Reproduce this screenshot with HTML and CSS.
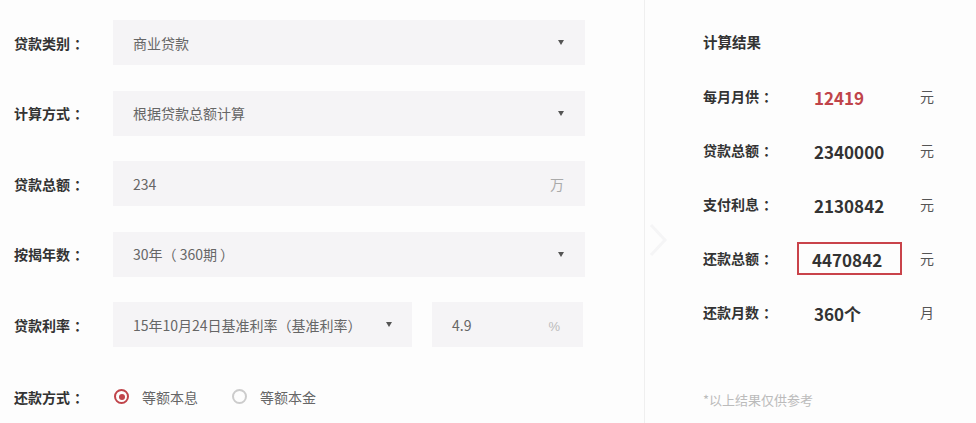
FILE: index.html
```html
<!DOCTYPE html>
<html lang="zh-CN">
<head>
<meta charset="utf-8">
<link rel="stylesheet" href="styles.css">
</head>
<body>
<div class="page">
  <div class="form">
    <div class="row">
      <div class="label">贷款类别<span class="colon">：</span></div>
      <div class="field select"><span>商业贷款</span><i class="caret"></i></div>
    </div>
    <div class="row">
      <div class="label">计算方式<span class="colon">：</span></div>
      <div class="field select"><span>根据贷款总额计算</span><i class="caret"></i></div>
    </div>
    <div class="row">
      <div class="label">贷款总额<span class="colon">：</span></div>
      <div class="field"><span>234</span><span class="unit">万</span></div>
    </div>
    <div class="row">
      <div class="label">按揭年数<span class="colon">：</span></div>
      <div class="field select"><span>30年（ 360期 ）</span><i class="caret"></i></div>
    </div>
    <div class="row">
      <div class="label">贷款利率<span class="colon">：</span></div>
      <div class="field select short"><span>15年10月24日基准利率（基准利率）</span><i class="caret"></i></div>
      <div class="field rate"><span>4.9</span><span class="unit pct">%</span></div>
    </div>
    <div class="row radio-row">
      <div class="label">还款方式<span class="colon">：</span></div>
      <label class="radio checked"><i class="dot"></i>等额本息</label>
      <label class="radio"><i class="dot"></i>等额本金</label>
    </div>
  </div>
  <div class="result">
    <svg class="chev" width="22" height="34" viewBox="0 0 22 34"><path d="M3 2 L17 17 L3 32" fill="none" stroke="#f5f5f6" stroke-width="3"/></svg>
    <div class="title">计算结果</div>
    <div class="rrow"><div class="rlabel">每月月供<span class="colon">：</span></div><div class="val red">12419</div><div class="runit">元</div></div>
    <div class="rrow"><div class="rlabel">贷款总额<span class="colon">：</span></div><div class="val">2340000</div><div class="runit">元</div></div>
    <div class="rrow"><div class="rlabel">支付利息<span class="colon">：</span></div><div class="val">2130842</div><div class="runit">元</div></div>
    <div class="rrow"><div class="rlabel">还款总额<span class="colon">：</span></div><div class="val boxed">4470842</div><div class="runit">元</div></div>
    <div class="rrow"><div class="rlabel">还款月数<span class="colon">：</span></div><div class="val">360个</div><div class="runit">月</div></div>
    <div class="note">*以上结果仅供参考</div>
  </div>
</div>
</body>
</html>
```

FILE: styles.css
```css
html, body {
  margin: 0;
  padding: 0;
  background: #fdfdfd;
}
body {
  font-family: "Noto Sans CJK SC", "Noto Sans", sans-serif;
  color: #333;
  width: 976px;
  height: 423px;
  overflow: hidden;
}
.page {
  display: flex;
  height: 423px;
}
.form {
  width: 645px;
  box-sizing: border-box;
  padding: 20px 0 0 14px;
  border-right: 1px solid #efefef;
}
.row {
  display: flex;
  align-items: center;
  height: 45px;
  margin-bottom: 25.5px;
}
.label {
  width: 99px;
  font-size: 14px;
  font-weight: 700;
  color: #333;
  flex: none;
}
.colon {
  padding-left: 4px;
}
.field {
  display: flex;
  align-items: center;
  justify-content: space-between;
  box-sizing: border-box;
  width: 472px;
  height: 45px;
  background: #f5f4f6;
  padding: 0 21px 0 20px;
  font-size: 14px;
  color: #666;
}
.field.short {
  width: 299px;
  padding-right: 20px;
}
.field.rate {
  width: 151px;
  margin-left: 20px;
}
.caret {
  width: 0;
  height: 0;
  border-left: 3.5px solid transparent;
  border-right: 3.5px solid transparent;
  border-top: 5px solid #555;
}
.unit {
  color: #aaa;
  font-size: 14px;
}
.pct {
  font-family: "Liberation Sans", sans-serif;
  font-size: 13px;
  color: #bbb;
  padding-top: 3px;
  margin-right: 2px;
}
.radio-row {
  margin-top: 24px;
  height: 48px;
}
.radio {
  display: flex;
  align-items: center;
  font-size: 14px;
  color: #666;
  margin-right: 33px;
}
.dot {
  width: 15px;
  height: 15px;
  box-sizing: border-box;
  border: 2px solid #ccc;
  border-radius: 50%;
  margin: 0 13px 0 1px;
  display: flex;
  align-items: center;
  justify-content: center;
}
.radio.checked .dot {
  border-color: #c0444a;
}
.radio.checked .dot::after {
  content: "";
  width: 6px;
  height: 6px;
  border-radius: 50%;
  background: #c0444a;
}
.result {
  position: relative;
  flex: 1;
  padding: 31px 0 0 58px;
}
.chev {
  position: absolute;
  left: 3px;
  top: 223px;
}
.title {
  font-size: 14.5px;
  font-weight: 700;
  color: #333;
  height: 22px;
  line-height: 22px;
  margin-bottom: 16px;
}
.rrow {
  display: flex;
  align-items: center;
  height: 54px;
}
.rlabel {
  width: 94px;
  font-size: 14px;
  font-weight: 700;
  color: #333;
}
.val {
  width: 105px;
  box-sizing: border-box;
  height: 33px;
  line-height: 31px;
  padding-left: 15px;
  font-size: 17px;
  font-weight: 700;
  color: #333;
  border: 2px solid transparent;
  margin-right: 18px;
}
.val.red {
  color: #c0444a;
}
.val.boxed {
  border-color: #c9434a;
  padding-left: 13px;
}
.runit {
  font-size: 14px;
  color: #555;
}
.note {
  margin-top: 51px;
  font-size: 13px;
  color: #bbb;
}
```
